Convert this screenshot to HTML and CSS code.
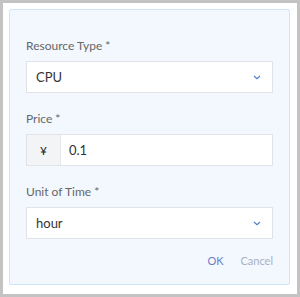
FILE: index.html
```html
<!DOCTYPE html>
<html lang="en">
<head>
    <meta charset="UTF-8">
    <title>Price Form</title>
    <link rel="stylesheet" href="styles.css">
</head>
<body>
    <div class="frame">
        <div class="form-card">
            <div class="form-item">
                <label class="form-label">Resource Type *</label>
                <div class="select-box">
                    <span class="select-value">CPU</span>
                    <svg class="chevron" width="8" height="5" viewBox="0 0 8 5"><path d="M1 1l3 2.6 3-2.6" fill="none" stroke="#4f7fd1" stroke-width="1.2"/></svg>
                </div>
            </div>
            <div class="form-item">
                <label class="form-label">Price *</label>
                <div class="input-group">
                    <span class="input-prefix">¥</span>
                    <span class="input-value">0.1</span>
                </div>
            </div>
            <div class="form-item">
                <label class="form-label">Unit of Time *</label>
                <div class="select-box">
                    <span class="select-value">hour</span>
                    <svg class="chevron" width="8" height="5" viewBox="0 0 8 5"><path d="M1 1l3 2.6 3-2.6" fill="none" stroke="#4f7fd1" stroke-width="1.2"/></svg>
                </div>
            </div>
            <div class="form-actions">
                <button class="btn-ok">OK</button>
                <button class="btn-cancel">Cancel</button>
            </div>
        </div>
    </div>
</body>
</html>
```

FILE: styles.css
```css
body {
    margin: 0;
    font-family: 'Lato', sans-serif;
    font-size: 12px;
}

.frame {
    width: 300px;
    height: 297px;
    box-sizing: border-box;
    border: 3px solid #c3c3c3;
    background-color: white;
    padding: 6px 7px 9px 6px;
}

.form-card {
    height: 100%;
    box-sizing: border-box;
    background-color: #f2f8fe;
    border: 1px solid #cfe5fa;
    border-radius: 2px;
    padding: 27px 16px 0 16px;
    display: flex;
    flex-direction: column;
}

.form-item {
    display: flex;
    flex-direction: column;
    margin-bottom: 17px;
}

.form-label {
    color: #666666;
    line-height: 17px;
    margin-bottom: 7px;
}

.select-box,
.input-group {
    height: 32px;
    box-sizing: border-box;
    border: 1px solid #e1e3e8;
    background-color: white;
    display: flex;
    align-items: center;
}

.select-box {
    padding: 0 11px 0 9px;
    justify-content: space-between;
}

.select-value,
.input-value {
    color: #333333;
    font-size: 13px;
}

.input-prefix {
    width: 33px;
    height: 100%;
    background-color: #f3f4f6;
    border-right: 1px solid #e6e8ec;
    display: flex;
    align-items: center;
    justify-content: center;
    color: #222222;
}

.input-value {
    padding-left: 8px;
}

.form-actions {
    display: flex;
    justify-content: flex-end;
    gap: 17px;
    margin-top: -2px;
}

.form-actions button {
    border: none;
    background: none;
    padding: 0;
    font-family: 'Lato', sans-serif;
    font-size: 11px;
    cursor: pointer;
}

.btn-ok {
    color: #6b7fc4;
}

.btn-cancel {
    color: #a9b0bf;
}
```
